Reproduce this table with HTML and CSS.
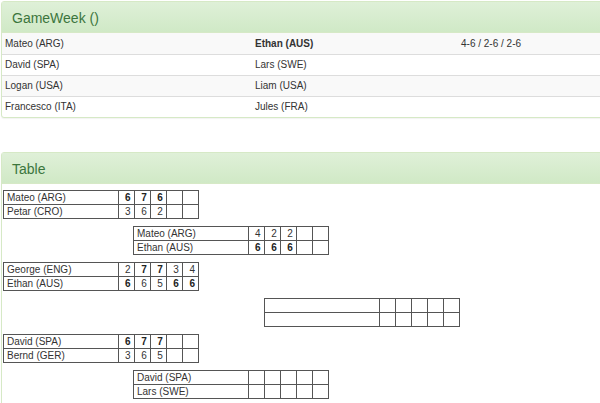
FILE: index.html
```html
<!DOCTYPE html>
<html>
<head>
<meta charset="utf-8">
<link rel="stylesheet" href="styles.css">
</head>
<body>
<div class="page">
  <div class="panel">
    <div class="panel-heading">GameWeek ()</div>
    <table class="games">
      <tr class="odd"><td class="c1">Mateo (ARG)</td><td class="c2 win">Ethan (AUS)</td><td class="c3">4-6 / 2-6 / 2-6</td></tr>
      <tr><td class="c1">David (SPA)</td><td class="c2">Lars (SWE)</td><td class="c3"></td></tr>
      <tr class="odd"><td class="c1">Logan (USA)</td><td class="c2">Liam (USA)</td><td class="c3"></td></tr>
      <tr><td class="c1">Francesco (ITA)</td><td class="c2">Jules (FRA)</td><td class="c3"></td></tr>
    </table>
  </div>

  <div class="panel panel-second">
    <div class="panel-heading">Table</div>
    <div class="bracket">
      <table class="match r1">
        <colgroup><col class="cn"><col class="cs"><col class="cs"><col class="cs"><col class="cs"><col class="cs"></colgroup>
        <tr><td class="name">Mateo (ARG)</td><td class="b">6</td><td class="b">7</td><td class="b">6</td><td></td><td></td></tr>
        <tr><td class="name">Petar (CRO)</td><td>3</td><td>6</td><td>2</td><td></td><td></td></tr>
      </table>
      <table class="match r2">
        <colgroup><col class="cn"><col class="cs"><col class="cs"><col class="cs"><col class="cs"><col class="cs"></colgroup>
        <tr><td class="name">Mateo (ARG)</td><td>4</td><td>2</td><td>2</td><td></td><td></td></tr>
        <tr><td class="name">Ethan (AUS)</td><td class="b">6</td><td class="b">6</td><td class="b">6</td><td></td><td></td></tr>
      </table>
      <table class="match r1">
        <colgroup><col class="cn"><col class="cs"><col class="cs"><col class="cs"><col class="cs"><col class="cs"></colgroup>
        <tr><td class="name">George (ENG)</td><td>2</td><td class="b">7</td><td class="b">7</td><td>3</td><td>4</td></tr>
        <tr><td class="name">Ethan (AUS)</td><td class="b">6</td><td>6</td><td>5</td><td class="b">6</td><td class="b">6</td></tr>
      </table>
      <table class="match r3">
        <colgroup><col class="cn"><col class="cs"><col class="cs"><col class="cs"><col class="cs"><col class="cs"></colgroup>
        <tr><td class="name"></td><td></td><td></td><td></td><td></td><td></td></tr>
        <tr><td class="name"></td><td></td><td></td><td></td><td></td><td></td></tr>
      </table>
      <table class="match r1">
        <colgroup><col class="cn"><col class="cs"><col class="cs"><col class="cs"><col class="cs"><col class="cs"></colgroup>
        <tr><td class="name">David (SPA)</td><td class="b">6</td><td class="b">7</td><td class="b">7</td><td></td><td></td></tr>
        <tr><td class="name">Bernd (GER)</td><td>3</td><td>6</td><td>5</td><td></td><td></td></tr>
      </table>
      <table class="match r2">
        <colgroup><col class="cn"><col class="cs"><col class="cs"><col class="cs"><col class="cs"><col class="cs"></colgroup>
        <tr><td class="name">David (SPA)</td><td></td><td></td><td></td><td></td><td></td></tr>
        <tr><td class="name">Lars (SWE)</td><td></td><td></td><td></td><td></td><td></td></tr>
      </table>
    </div>
  </div>
</div>
</body>
</html>
```

FILE: styles.css
```css
html, body {
  margin: 0;
  padding: 0;
  background: #fff;
  overflow: hidden;
}
body {
  font-family: "Liberation Sans", Arial, sans-serif;
  color: #333;
  font-size: 10px;
}
.page {
  padding: 1px 0 0 1px;
  width: 700px;
}
.panel {
  border: 1px solid #d6e9c6;
  border-radius: 3px;
  background: #fff;
  box-shadow: 0 1px 1px rgba(0,0,0,0.05);
}
.panel-second {
  margin-top: 34px;
}
.panel-heading {
  box-sizing: border-box;
  height: 31px;
  padding: 1px 10px 0 10px;
  line-height: 30px;
  font-size: 14px;
  color: #3c763d;
  background: linear-gradient(to bottom, #dff0d8 0%, #d0e9c6 100%);
  border-bottom: 1px solid #d6e9c6;
}
.games {
  border-collapse: collapse;
  width: 100%;
}
.games td {
  padding: 0 3px;
  height: 20px;
  line-height: 20px;
  border-top: 1px solid #ddd;
  vertical-align: middle;
}
.games tr:first-child td {
  border-top: 0;
  height: 21px;
}
.games tr.odd td {
  background: #f9f9f9;
}
.games .c1 { width: 244px; }
.games .c2 { width: 200px; }
.games .win { font-weight: bold; }

.bracket {
  padding: 6px 0 0 0;
}
.match {
  border-collapse: collapse;
  table-layout: fixed;
  width: 196px;
  margin-bottom: 7px;
  color: #333;
}
.match col.cn { width: 114px; }
.match col.cs { width: 16px; }
.match td {
  border: 1px solid #555;
  height: 13px;
  padding: 0 3px 0 3px;
  line-height: 13px;
  font-size: 10px;
  text-align: right;
  white-space: nowrap;
  overflow: hidden;
}
.match td.name {
  text-align: left;
}
.match td.b {
  font-weight: bold;
  color: #222;
}
.r1 { margin-left: 1px; }
.r2 { margin-left: 131px; }
.r3 { margin-left: 262px; }
```
